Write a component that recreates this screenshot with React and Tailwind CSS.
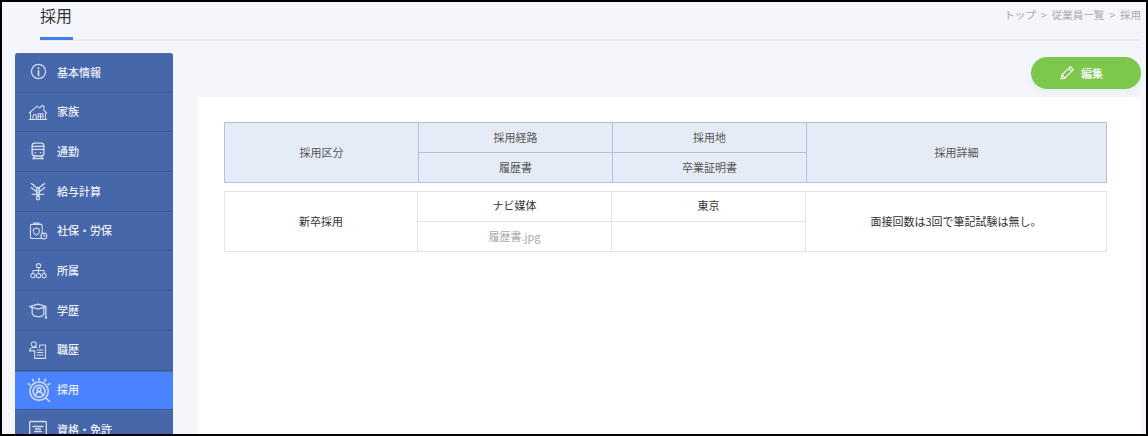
const font = { fontFamily: '"Noto Sans CJK JP", "Noto Sans", sans-serif' };

const S = ({ children, size = 19, sw = 1.3 }) => (
  <svg width={size} height={size} viewBox="0 0 24 24" fill="none" stroke="#d5dcec" strokeWidth={sw} strokeLinecap="round" strokeLinejoin="round">{children}</svg>
);

const icons = {
  info: <S size={17} sw={1.8}><circle cx="12" cy="12" r="10" /><path d="M12 11v6.5" strokeWidth="2.4" /><path d="M12 7v.4" strokeWidth="2.6" /></S>,
  house: <S size={20}><path d="M1.500 13 11 5l3 2 3-3 2 1v5l3.500 3" /><path d="M3 12v9h18v-8" /><path d="M1.500 21h21" /><path d="M6 21v-4a2 2 0 0 1 4 0v4M12 21v-7h6v7M12 17h6M15 14v7" /></S>,
  train: <S size={20} sw={1.600}><rect x="5" y="2.500" width="14" height="15.500" rx="3" /><path d="M5 10h14M5 6.500h14M8.500 14h.5M15 14h.5M8 18l-2 3.500M16 18l2 3.500M6 21h12" /></S>,
  yen: <S size={20} sw={1.500}><path d="m4 3 8 6 8-6M4 8l8 6 8-6M5 16h14M7 4v2M17 4v2" /><circle cx="12" cy="9.500" r="2" /><circle cx="12" cy="15.500" r="2" /><circle cx="12" cy="20.500" r="2" /></S>,
  shield: <S size={20}><rect x="3" y="4" width="14" height="17" rx="1.500" /><path d="M7 4V2.500h6V4" /><path d="M6.500 10l3.500-1.500 3.500 1.500v3c0 2-2 3-3.500 4-1.500-1-3.500-2-3.500-4z" /><circle cx="19" cy="18" r="3.500" fill="#4767ab" /><path d="M19 16.500V18h1" /></S>,
  org: <S size={19}><circle cx="12" cy="6" r="2.700" /><circle cx="5" cy="18.500" r="2.700" /><circle cx="12" cy="18.500" r="2.700" /><circle cx="19" cy="18.500" r="2.700" /><path d="M12 8.700v7M5 15.800V12h14v3.800" /></S>,
  grad: <S size={20} sw={1.500}><path d="M2 8l10-3 10 3-10 3z" /><path d="M5 9v7c0 2 3 4 7 4s6-1 7-3V9" /><path d="M21.500 10v9" /><circle cx="21.500" cy="21" r="0.800" fill="#d5dcec" /></S>,
  resume: <S size={20}><circle cx="7" cy="5" r="3" /><path d="M2 13c0-3 2-4 5-4h4" /><path d="M2 13h6" /><path d="M8 13v9h13V6h-7v3" /><path d="M11 12h7M11 15h7M11 18h7" /></S>,
  search: <S size={26} sw={1.400}><circle cx="13" cy="14" r="8.500" /><circle cx="13" cy="14" r="5.500" /><circle cx="13" cy="12.500" r="1.700" /><path d="M10 17c.5-2 1.500-2.500 3-2.500s2.500.5 3 2.500M19 20l4 4M13 2v2M7 3l1 2M19 3l-1 2M3 7l1.500 1M23 7l-1.500 1" /></S>,
  license: <S size={20} sw={1.600}><rect x="2" y="3" width="20" height="17" rx="1" /><path d="M6 9h12M9 12h6M8 15h8" /></S>,
};

const items = [
  ["info", "基本情報"],
  ["house", "家族"],
  ["train", "通勤"],
  ["yen", "給与計算"],
  ["shield", "社保・労保"],
  ["org", "所属"],
  ["grad", "学歴"],
  ["resume", "職歴"],
  ["search", "採用", true],
  ["license", "資格・免許"],
];

const Head = ({ className = "", children }) => (
  <div className={`flex items-center justify-center border-[#b3c3dc] ${className}`}>{children}</div>
);
const Cell = ({ className = "", children }) => (
  <div className={`flex items-center justify-center border-[#e3e3e3] ${className}`}>{children}</div>
);

export default function App() {
  return (
    <div style={font} className="w-[1148px] h-[436px] box-border border-2 border-black bg-[#f4f6fb] overflow-hidden text-[#444]">
      <header className="h-[39px] box-border ml-[38px] mr-[5px] flex justify-between border-b-2 border-[#e9ecf3]">
        <div className="h-[38px] shrink-0 box-border w-[33px] border-b-[3px] border-[#3f7cf5] text-[16px] leading-[26px] text-[#333] whitespace-nowrap">採用</div>
        <div className="flex gap-[5px] text-[10.500px] leading-[26px] text-[#aaa] whitespace-nowrap">
          <span>トップ</span><span>{">"}</span><span>従業員一覧</span><span>{">"}</span><span>採用</span>
        </div>
      </header>
      <div className="flex pl-[13px] pr-[5px]">
        <nav className="w-[158px] mt-[12px] shrink-0 bg-[#4767ab] rounded-t-[3px] overflow-hidden">
          {items.map(([icon, label, active]) => (
            <div key={label} className={`h-[39.700px] box-border border-b border-t pb-[2px] border-b-[#3b5896] border-t-[#4f6eb2] flex items-center ${active ? "bg-[#4a83ff] border-t-[#4a83ff]" : ""}`}>
              <div className="w-[42px] pl-[8px] pr-[4px] box-border flex justify-center shrink-0">{icons[icon]}</div>
              <span className="text-[11px] text-[#eef1f8] font-medium whitespace-nowrap">{label}</span>
            </div>
          ))}
        </nav>
        <main className="flex-1 ml-[25px] min-w-0">
          <div className="flex justify-end pt-[16px] h-[56px] box-border">
            <button className="w-[110px] h-[32px] rounded-full bg-[#7dc84c] flex items-center justify-center gap-[6px] pr-[10px] text-white text-[11px] font-medium shadow-[0_4px_8px_rgba(125,200,76,0.1)]">
              <svg width="16" height="16" viewBox="0 0 24 24" fill="none" stroke="#fff" strokeWidth="1.600" strokeLinejoin="round"><path d="M3 21l1.500-6L17 2.500l4.500 4.500L9 19.500z" /><path d="M14.500 5l4.500 4.500M4.500 15 9 19.500" /></svg>
              編集
            </button>
          </div>
          <section className="bg-white h-[400px] px-[26px] pt-[25px] text-[11px]">
            <div className="w-[883px] grid grid-cols-[194px_194px_194px_299px] h-[61px] bg-[#e6ecf7] border border-[#b3c3dc] box-border text-[#555]">
              <Head className="border-r">採用区分</Head>
              <div className="flex flex-col border-r border-[#b3c3dc]">
                <Head className="flex-1 border-b pb-[1px]">採用経路</Head>
                <Head className="flex-1 pb-[1px]">履歴書</Head>
              </div>
              <div className="flex flex-col border-r border-[#b3c3dc]">
                <Head className="flex-1 border-b pb-[1px]">採用地</Head>
                <Head className="flex-1 pb-[1px]">卒業証明書</Head>
              </div>
              <Head>採用詳細</Head>
            </div>
            <div className="w-[883px] mt-[8px] grid grid-cols-[193px_194px_194px_300px] h-[61px] border border-[#e3e3e3] box-border text-[#333]">
              <Cell className="border-r">新卒採用</Cell>
              <div className="flex flex-col border-r border-[#e3e3e3]">
                <Cell className="h-[30px] box-border border-b pb-[3px]">ナビ媒体</Cell>
                <Cell className="flex-1 text-[#aaa]">履歴書.jpg</Cell>
              </div>
              <div className="flex flex-col border-r border-[#e3e3e3]">
                <Cell className="h-[30px] box-border border-b pb-[3px]">東京</Cell>
                <div className="flex-1" />
              </div>
              <Cell>面接回数は3回で筆記試験は無し。</Cell>
            </div>
          </section>
        </main>
      </div>
    </div>
  );
}
